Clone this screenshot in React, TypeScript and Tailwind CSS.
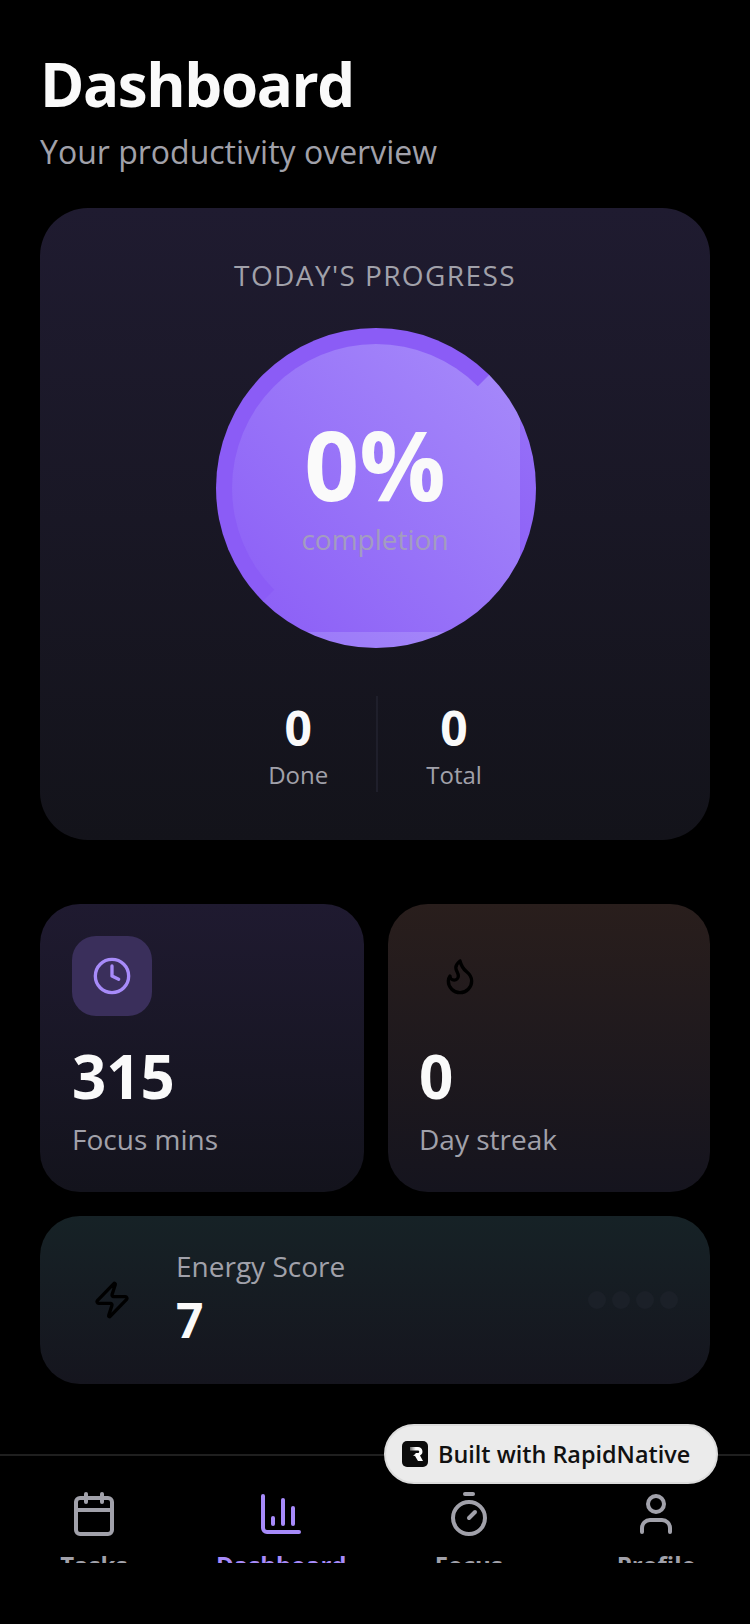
import { Calendar, ChartColumn, Clock, Flame, Timer, User, Zap } from 'lucide-react';

const TABS = [
  { label: 'Tasks', icon: Calendar, active: false },
  { label: 'Dashboard', icon: ChartColumn, active: true },
  { label: 'Focus', icon: Timer, active: false },
  { label: 'Profile', icon: User, active: false },
];

export default function App() {
  return (
    <div className="relative flex h-[1624px] w-[750px] flex-col overflow-hidden bg-black font-['Open_Sans',sans-serif]">
      <main className="flex flex-1 flex-col px-10 pt-[48px]">
        <h1 className="text-[60px] leading-[72px] font-bold tracking-[-1.4px] text-[#fafafa]">Dashboard</h1>
        <p className="mt-[8px] text-[32px] leading-[48px] text-[#a1a1aa]">Your productivity overview</p>

        <section className="mt-[32px] flex h-[632px] flex-col items-center rounded-[48px] bg-linear-to-b from-[#1f1b30] to-[#13131a] pt-[43px]">
          <h2 className="text-[28px] leading-[48px] tracking-[1.4px] text-[#a1a1aa]">TODAY'S PROGRESS</h2>
          <div className="mt-[29px] ml-[2px] flex size-[320px] flex-col items-center rounded-full border-[16px] border-t-[#8b5cf6] border-r-transparent border-b-transparent border-l-[#8b5cf6] bg-linear-to-bl from-[#a78bfa] to-[#8b5cf6] pr-[2px]">
            <span className="mt-[64px] text-[96px] leading-[112px] font-bold text-[#fafafa]">0%</span>
            <span className="mt-[1px] text-[28px] leading-[36px] text-[#a39cc0]">completion</span>
          </div>
          <div className="mt-[48px] flex h-[96px] items-center">
            <div className="flex flex-col items-center px-[48px] pt-[4px]">
              <span className="text-[48px] leading-[56px] font-bold text-[#fafafa]">0</span>
              <span className="mt-[1px] text-[24px] leading-[36px] text-[#a1a1aa]">Done</span>
            </div>
            <div className="h-full w-[2px] bg-[#1f1f2b]" />
            <div className="flex flex-col items-center px-[48px] pt-[4px]">
              <span className="text-[48px] leading-[56px] font-bold text-[#fafafa]">0</span>
              <span className="mt-[1px] text-[24px] leading-[36px] text-[#a1a1aa]">Total</span>
            </div>
          </div>
        </section>

        <div className="mt-[64px] flex gap-[24px]">
          <div className="h-[288px] w-[324px] rounded-[40px] bg-linear-to-b from-[#1f1a30] to-[#13131c] p-[32px]">
            <div className="flex size-[80px] items-center justify-center rounded-[24px] bg-[#3a2f5b]">
              <Clock size={40} color="#a78bfa" />
            </div>
            <div className="mt-[26px] text-[60px] leading-[68px] font-bold text-[#fafafa]">315</div>
            <div className="mt-[9px] text-[28px] leading-[40px] text-[#a1a1aa]">Focus mins</div>
          </div>
          <div className="h-[288px] w-[322px] rounded-[40px] bg-linear-to-b from-[#291e1c] to-[#15141e] py-[32px] pr-[32px] pl-[31px]">
            <div className="flex size-[80px] items-center justify-center">
              <Flame size={40} color="#000000" className="ml-[2px]" />
            </div>
            <div className="mt-[26px] text-[60px] leading-[68px] font-bold text-[#fafafa]">0</div>
            <div className="mt-[9px] text-[28px] leading-[40px] text-[#a1a1aa]">Day streak</div>
          </div>
        </div>

        <div className="mt-[24px] flex h-[168px] items-center rounded-[40px] bg-linear-to-b from-[#162226] to-[#15151e] px-[32px]">
          <div className="flex size-[80px] items-center justify-center">
            <Zap size={40} color="#000000" />
          </div>
          <div className="ml-[24px] flex-1 pb-[4px]">
            <div className="text-[28px] leading-[40px] text-[#a1a1aa]">Energy Score</div>
            <div className="mt-[4px] text-[48px] leading-[60px] font-bold text-[#fafafa]">7</div>
          </div>
          <div className="flex gap-[6px]">
            {[0, 1, 2, 3].map((i) => (
              <div key={i} className="size-[18px] rounded-full bg-[#1b2028]" />
            ))}
          </div>
        </div>
      </main>

      <nav className="mb-[61px] flex h-[109px] overflow-hidden border-t-2 border-[#1f1f1f]">
        {TABS.map((t) => (
          <div key={t.label} className="flex h-[200px] flex-1 flex-col items-center pt-[34px]">
            <t.icon size={48} color={t.active ? '#a78bfa' : '#a1a1aa'} className="shrink-0" />
            <span className={`mt-[9px] text-[24px] leading-[36px] font-bold ${t.active ? 'text-[#a78bfa]' : 'text-[#a1a1aa]'}`}>{t.label}</span>
          </div>
        ))}
      </nav>

      <div className="absolute top-[1424px] left-[384px] flex h-[60px] w-[334px] items-center gap-[10px] rounded-full border-2 border-[#dcdcdc] bg-[#ebebeb] pl-[16px]">
        <svg width="26" height="26" viewBox="0 0 26 26">
          <defs>
            <linearGradient id="logoFade" x1="0" y1="0" x2="1" y2="0">
              <stop offset="0" stopColor="#6b6b6b" />
              <stop offset="0.45" stopColor="#ffffff" />
            </linearGradient>
          </defs>
          <rect width="26" height="26" rx="5" fill="#0b0b0b" />
          <path d="M8 6h8a4.500 4.500 0 0 1 2 8.500L21 20h-5l-3-5h-2l3-3h2a1.200 1.200 0 0 0 0-2.500H8z" fill="url(#logoFade)" />
        </svg>
        <span className="text-[23.4px] leading-[32px] font-semibold text-[#111111]">Built with RapidNative</span>
      </div>
    </div>
  );
}
